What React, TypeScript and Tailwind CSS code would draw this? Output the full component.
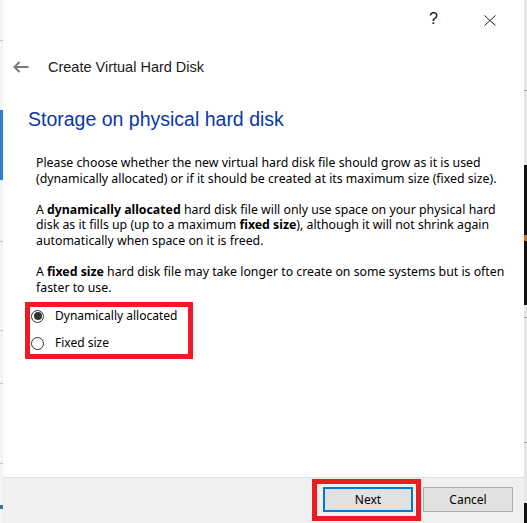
import React from "react";

function Radio({ checked }: { checked: boolean }) {
  return (
    <span className="flex h-[13px] w-[13px] items-center justify-center rounded-full border border-[#333333] bg-white">
      {checked && <span className="h-[8px] w-[8px] rounded-full bg-[#333333]" />}
    </span>
  );
}

export default function App() {
  return (
    <div className="flex h-[523px] w-[527px] overflow-hidden bg-white text-black font-['Noto_Sans',sans-serif]">
      {/* left edge of the window behind */}
      <div className="flex w-[3px] flex-col bg-[#f4f4f4]">
        <div className="h-[40px]" />
        <div className="h-px bg-[#c8c8c8]" />
        <div className="h-[69px]" />
        <div className="h-[70px] bg-[#2b7fd4]" />
        <div className="h-[61px]" />
        <div className="h-px bg-[#c8c8c8]" />
        <div className="h-[88px]" />
        <div className="h-px bg-[#c8c8c8]" />
        <div className="h-[52px]" />
        <div className="h-px bg-[#c8c8c8]" />
        <div className="h-[79px]" />
        <div className="h-px bg-[#c8c8c8]" />
        <div className="h-[41px]" />
        <div className="h-[4px] bg-[#3a6fb0]" />
      </div>

      {/* dialog */}
      <div className="flex w-[521px] flex-col">
        {/* caption buttons */}
        <div className="flex h-[40px] items-start justify-end pr-[28px] pt-[10px] font-['Liberation_Sans',sans-serif]">
          <span className="text-[16px] leading-[18px] text-[#111111]">?</span>
          <svg className="ml-[46px] mt-[5px]" width="12" height="11" viewBox="0 0 12 11">
            <path d="M0.5 0.5 L11.5 10.5 M11.5 0.5 L0.5 10.5" stroke="#222222" strokeWidth="1" fill="none" />
          </svg>
        </div>

        {/* back + title */}
        <div className="flex h-[54px] items-center pl-[10px]">
          <svg width="16" height="12" viewBox="0 0 16 12">
            <path d="M1.5 6 H15.5 M6.5 1 L1.5 6 L6.5 11" stroke="#7a7a7a" strokeWidth="2" fill="none" />
          </svg>
          <span className="ml-[19px] font-['Liberation_Sans',sans-serif] text-[14.5px] leading-[20px] text-[#1a1a1a]">
            Create Virtual Hard Disk
          </span>
        </div>

        {/* heading */}
        <div className="mt-[11px] pl-[25px] font-['Liberation_Sans',sans-serif] text-[19.5px] leading-[28px] text-[#0a37a8]">
          Storage on physical hard disk
        </div>

        {/* body */}
        <div className="mt-[22px] pl-[33px] text-[12.3px] leading-[15.6px] whitespace-nowrap">
          <p>
            Please choose whether the new virtual hard disk file should grow as it is used
            <br />
            (dynamically allocated) or if it should be created at its maximum size (fixed size).
          </p>
          <p className="mt-[15.6px]">
            A <b>dynamically allocated</b> hard disk file will only use space on your physical hard
            <br />
            disk as it fills up (up to a maximum <b>fixed size</b>), although it will not shrink again
            <br />
            automatically when space on it is freed.
          </p>
          <p className="mt-[15.6px]">
            A <b>fixed size</b> hard disk file may take longer to create on some systems but is often
            <br />
            faster to use.
          </p>
        </div>

        {/* radios with red annotation */}
        <div className="ml-[22px] mt-[7px] flex w-[168px] flex-col border-[5px] border-[#ed1c24] pb-[2px] pl-px text-[12px]">
          <label className="flex h-[18px] items-center">
            <Radio checked />
            <span className="ml-[11px]">Dynamically allocated</span>
          </label>
          <label className="mt-[9px] flex h-[18px] items-center">
            <Radio checked={false} />
            <span className="ml-[11px]">Fixed size</span>
          </label>
        </div>

        {/* footer */}
        <div className="mt-auto flex h-[46px] items-start justify-end border-t border-[#dfdfdf] bg-[#f0f0f0] pr-[11px] text-[12px]">
          <div className="mt-px flex h-[42px] w-[109px] items-start border-[5px] border-[#ed1c24] pl-[6px] pt-[3px]">
            <button className="flex h-[25px] w-[90px] items-center justify-center border-2 border-[#0078d7] bg-[#e1e1e1] text-black">
              Next
            </button>
          </div>
          <button className="ml-[2px] mt-[9px] flex h-[25px] w-[90px] items-center justify-center border border-[#adadad] bg-[#e1e1e1] text-black">
            Cancel
          </button>
        </div>
      </div>

      {/* right edge of the window behind */}
      <div className="flex w-[3px] flex-col bg-[#e6e6e6]">
        <div className="h-[90px]" />
        <div className="h-px bg-[#a0a0a0]" />
        <div className="h-[74px]" />
        <div className="h-[70px] bg-[#111111]" />
        <div className="h-[6px] bg-[#c07a30]" />
        <div className="h-[64px] bg-[#111111]" />
        <div className="h-[12px]" />
        <div className="h-px bg-[#a0a0a0]" />
        <div className="h-[124px]" />
        <div className="h-px bg-[#a0a0a0]" />
        <div className="h-[60px]" />
        <div className="flex-1 bg-[#111111]" />
      </div>
    </div>
  );
}
